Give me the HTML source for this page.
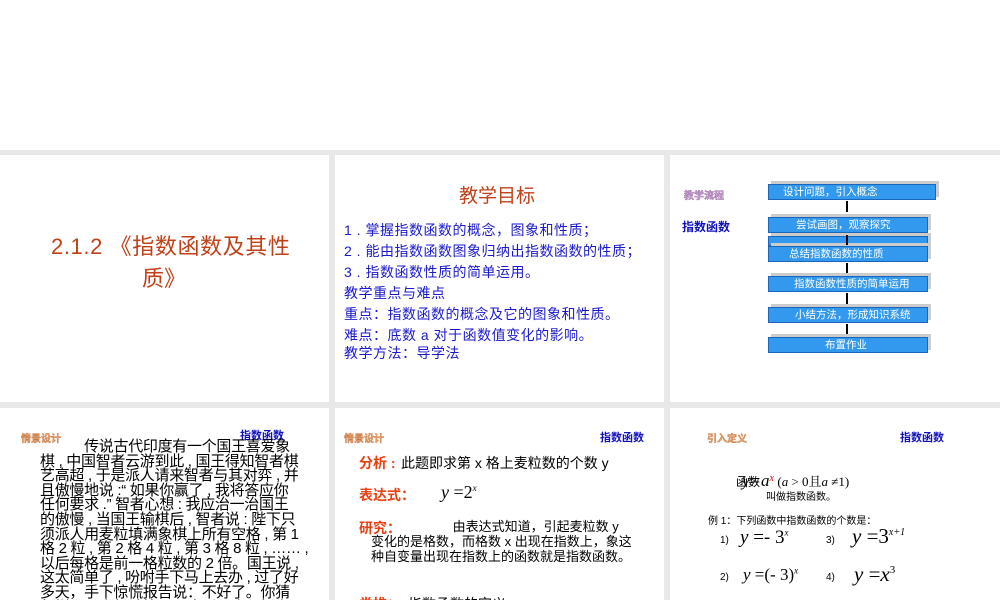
<!DOCTYPE html>
<html><head><meta charset="utf-8"><style>
*{margin:0;padding:0;box-sizing:border-box}
html,body{overflow:hidden}
body{width:1000px;height:600px;background:#e8e8e8;position:relative;font-family:"Liberation Sans","Noto Sans CJK SC",sans-serif}
.top{position:absolute;left:0;top:0;width:1000px;height:150px;background:#fff}
.p{position:absolute;background:#fff;overflow:hidden}
.a{position:absolute;white-space:nowrap}
.blue{color:#1a1acc}
.tag{position:absolute;font-size:10px;font-weight:bold;color:#e8a070;-webkit-text-stroke:0.3px #b86020}
.hd{position:absolute;font-size:11px;font-weight:bold;color:#1010c0}
.box{position:absolute;left:98px;width:160px;height:16px;background:#3399ee;border:1px solid #1a66bb;color:#fff;font-size:10.5px;line-height:14px;box-shadow:3px -3px 0 #ccc}
.arr{position:absolute;left:176px;width:2px;background:#000}
.ser{font-family:"Liberation Serif","Noto Serif CJK SC",serif;font-style:italic}
</style></head><body>
<div class="top"></div>

<div class="p" style="left:0;top:155px;width:329px;height:247px">
 <div class="a" style="left:51px;top:78px;font-size:22px;letter-spacing:0.6px;color:#c04018;line-height:28px">2.1.2 《指数函数及其性</div>
 <div class="a" style="left:142px;top:106px;font-size:22px;color:#c04018">质》</div>
</div>

<div class="p" style="left:335px;top:155px;width:329px;height:247px">
 <div class="a" style="left:124px;top:26px;font-size:19px;color:#c04018">教学目标</div>
 <div class="a blue" style="left:9px;top:65px;font-size:14px;letter-spacing:0.5px;line-height:21px">1 . 掌握指数函数的概念，图象和性质；<br>2 . 能由指数函数图象归纳出指数函数的性质；<br>3 . 指数函数性质的简单运用。<br>教学重点与难点<br>重点：指数函数的概念及它的图象和性质。</div>
 <div class="a blue" style="left:9px;top:171px;font-size:14px;letter-spacing:0.5px;line-height:18px">难点：底数 a 对于函数值变化的影响。<br>教学方法：导学法</div>
</div>

<div class="p" style="left:670px;top:155px;width:330px;height:247px">
 <div class="tag" style="left:14px;top:32px;color:#c8a0d0;-webkit-text-stroke:0.3px #805090">教学流程</div>
 <div class="hd" style="left:12px;top:63px;font-size:12px">指数函数</div>
 <div class="box" style="top:29px;width:168px;padding-left:14px">设计问题，引入概念</div>
 <div class="arr" style="top:46px;height:11px"></div>
 <div class="box" style="top:62px;padding-left:27px">尝试画图，观察探究</div>
 <div class="box" style="top:81px;height:10px"></div>
 <div class="box" style="top:91px;padding-left:20px">总结指数函数的性质</div>
 <div class="arr" style="top:80px;height:10px"></div>
 <div class="arr" style="top:108px;height:12px"></div>
 <div class="box" style="top:121px;padding-left:25px">指数函数性质的简单运用</div>
 <div class="arr" style="top:138px;height:13px"></div>
 <div class="box" style="top:152px;padding-left:26px">小结方法，形成知识系统</div>
 <div class="arr" style="top:169px;height:12px"></div>
 <div class="box" style="top:182px;padding-left:56px">布置作业</div>
</div>

<div class="p" style="left:0;top:408px;width:329px;height:192px">
 <div class="tag" style="left:21px;top:22px">情景设计</div>
 <div class="hd" style="left:240px;top:19px">指数函数</div>
 <div class="a" style="left:40px;top:32px;font-size:15px;line-height:14.6px;color:#000;letter-spacing:-0.3px">　　　传说古代印度有一个国王喜爱象<br>棋 , 中国智者云游到此 , 国王得知智者棋<br>艺高超 , 于是派人请来智者与其对弈 , 并<br>且傲慢地说 :“ 如果你赢了 , 我将答应你<br>任何要求 .” 智者心想 : 我应治一治国王<br>的傲慢 , 当国王输棋后 , 智者说 : 陛下只<br>须派人用麦粒填满象棋上所有空格 , 第 1<br>格 2 粒 , 第 2 格 4 粒 , 第 3 格 8 粒 , …… ,<br>以后每格是前一格粒数的 2 倍。国王说 ,<br>这太简单了 , 吩咐手下马上去办 , 过了好<br>多天，手下惊慌报告说：不好了。你猜<br>怎样？原来经计算，印度派尽人与智者</div>
</div>

<div class="p" style="left:335px;top:408px;width:329px;height:192px">
 <div class="tag" style="left:9px;top:22px">情景设计</div>
 <div class="hd" style="left:265px;top:21px">指数函数</div>
 <div class="a" style="left:24px;top:45px;font-size:14px;font-weight:bold;color:#e84010">分析 :</div>
 <div class="a" style="left:66px;top:45px;font-size:14px;color:#000">此题即求第 x 格上麦粒数的个数 y</div>
 <div class="a" style="left:24px;top:77px;font-size:14px;font-weight:bold;color:#e84010">表达式：</div>
 <div class="a ser" style="left:106px;top:74px;font-size:18px;color:#000">y <span style="font-style:normal">=2</span><sup style="font-size:9px">x</sup></div>
 <div class="a" style="left:24px;top:110px;font-size:14px;font-weight:bold;color:#e84010">研究：</div>
 <div class="a" style="left:36px;top:111px;font-size:13px;line-height:15px;color:#000">　　　　　　 由表达式知道，引起麦粒数 y<br>变化的是格数，而格数 x 出现在指数上，象这<br>种自变量出现在指数上的函数就是指数函数。</div>
 <div class="a" style="left:24px;top:186px;font-size:14px;font-weight:bold;color:#e84010">类推：　<span style="color:#000;font-weight:normal">指数函数的定义</span></div>
</div>

<div class="p" style="left:670px;top:408px;width:330px;height:192px">
 <div class="tag" style="left:37px;top:22px">引入定义</div>
 <div class="hd" style="left:230px;top:21px">指数函数</div>
 <div class="a" style="left:66px;top:63px;font-size:12px;color:#000">函数<span class="ser" style="font-size:17px;margin-left:-18px">y=a</span><sup class="ser" style="color:#e00;font-size:10px">x</sup> <span class="ser" style="font-size:13px;font-style:normal">(<i>a</i> &gt; 0且<i>a</i> ≠1)</span></div>
 <div class="a" style="left:96px;top:80px;font-size:10px;color:#000">叫做指数函数。</div>
 <div class="a" style="left:38px;top:104px;font-size:10px;color:#000">例 1：下列函数中指数函数的个数是：</div>
 <div class="a" style="left:50px;top:127px;font-size:10px;color:#000">1)</div>
 <div class="a ser" style="left:70px;top:119px;font-size:19px;color:#000">y <span style="font-style:normal">=- 3</span><sup style="font-size:9px">x</sup></div>
 <div class="a" style="left:156px;top:127px;font-size:10px;color:#000">3)</div>
 <div class="a ser" style="left:182px;top:116px;font-size:21px;color:#000">y <span style="font-style:normal">=3</span><sup style="font-size:10px">x+1</sup></div>
 <div class="a" style="left:50px;top:164px;font-size:10px;color:#000">2)</div>
 <div class="a ser" style="left:73px;top:157px;font-size:17px;color:#000">y <span style="font-style:normal">=(- 3)</span><sup style="font-size:9px">x</sup></div>
 <div class="a" style="left:156px;top:164px;font-size:10px;color:#000">4)</div>
 <div class="a ser" style="left:184px;top:154px;font-size:21px;color:#000">y <span style="font-style:normal">=</span>x<sup style="font-size:11px;font-style:normal">3</sup></div>
</div>
</body></html>
